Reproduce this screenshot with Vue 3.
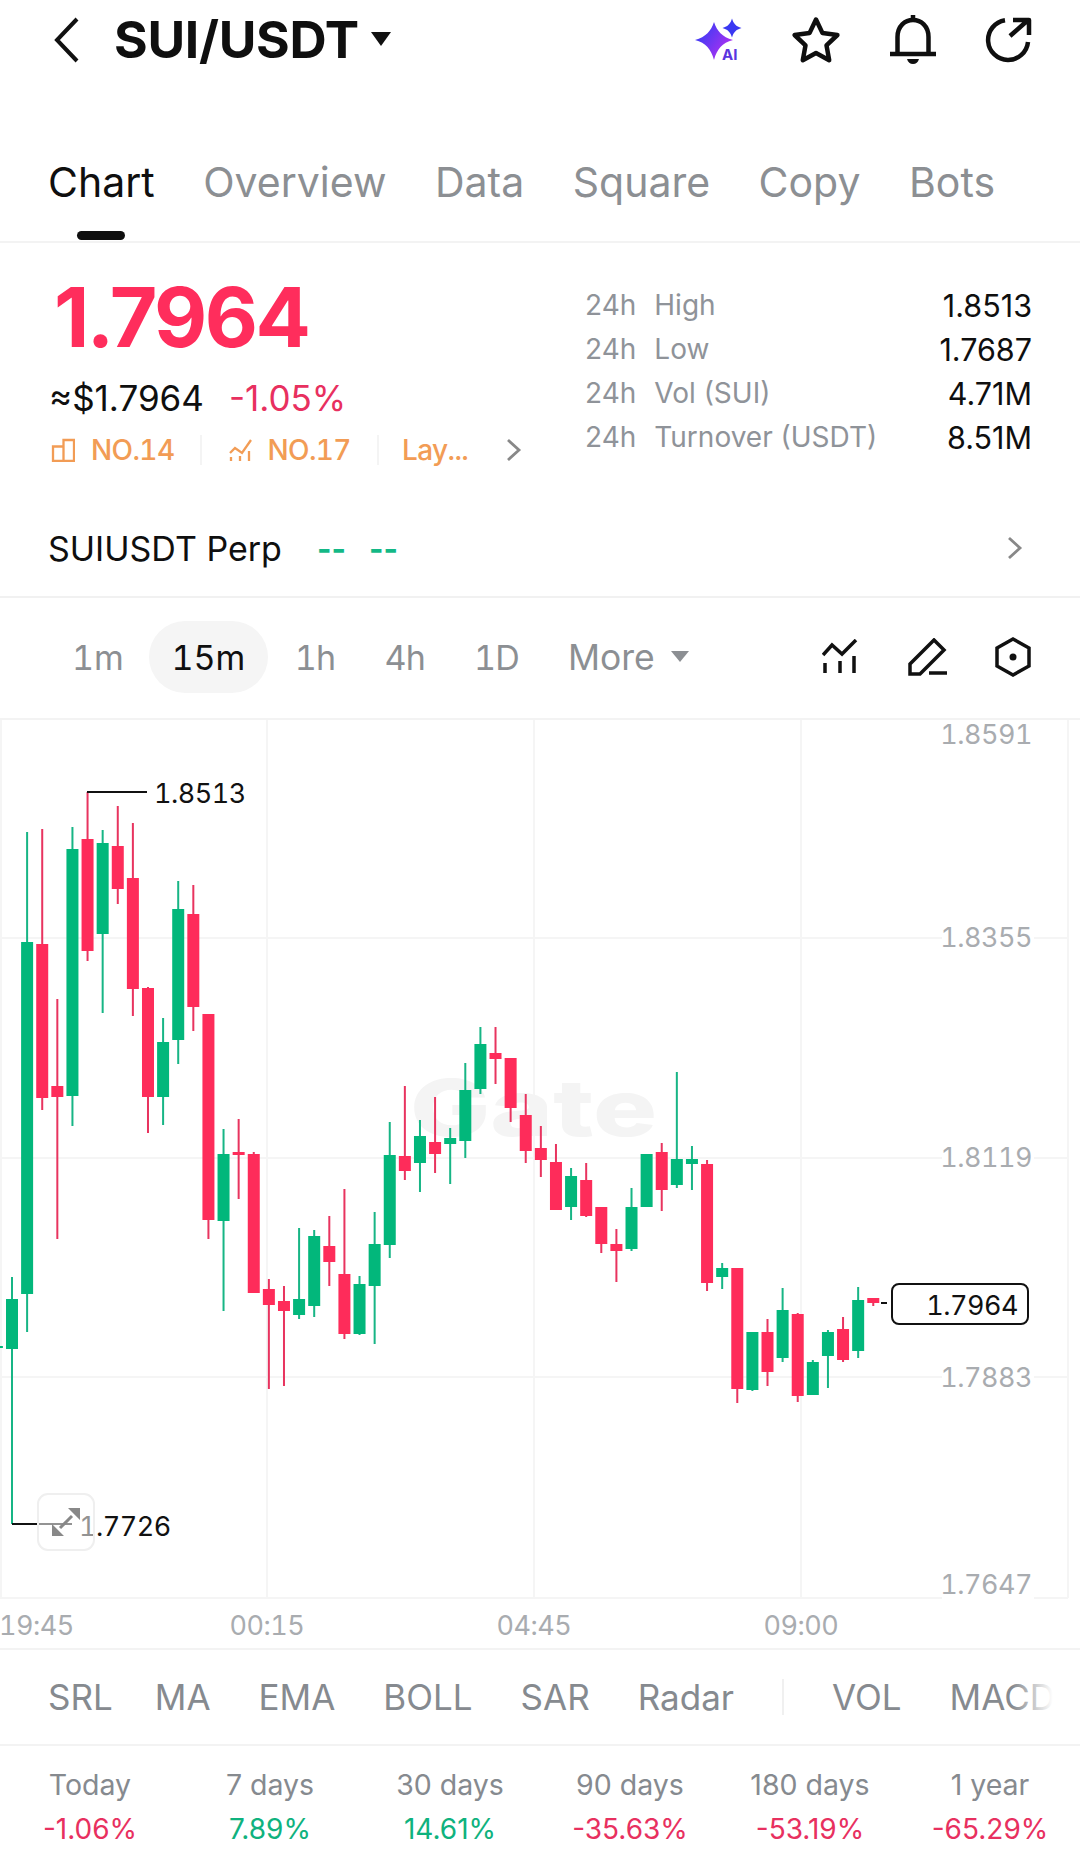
<script setup>
const G = 'g', R = 'r'
const raw = [
  [G,1345,1346,1348,1348],
  [G,1277,1299,1349,1524],[G,832,942,1294,1332],[R,829,944,1098,1110],[R,999,1086,1097,1239],
  [G,827,849,1096,1126],[R,792,839,951,961],[G,830,843,934,1013],[R,806,846,889,904],
  [R,823,878,989,1016],[R,987,988,1097,1133],[G,1018,1042,1097,1125],[G,881,909,1040,1064],
  [R,885,914,1007,1031],[R,1014,1014,1220,1239],[G,1129,1154,1221,1311],[R,1119,1152,1155,1199],
  [R,1152,1154,1293,1293],[R,1279,1289,1305,1389],[R,1286,1301,1311,1386],[G,1228,1299,1315,1319],
  [G,1230,1236,1306,1317],[R,1216,1246,1262,1286],[R,1189,1274,1334,1339],[G,1276,1284,1334,1335],
  [G,1212,1244,1286,1344],[G,1122,1155,1245,1258],[R,1086,1156,1171,1180],[G,1120,1136,1163,1192],
  [R,1097,1142,1154,1173],[G,1128,1138,1144,1184],[G,1063,1090,1141,1158],[G,1027,1044,1089,1094],
  [R,1027,1053,1059,1084],[R,1058,1058,1108,1122],[R,1094,1115,1151,1163],[R,1126,1148,1160,1177],
  [R,1144,1162,1210,1210],[G,1168,1176,1207,1220],[R,1163,1180,1216,1217],[R,1207,1207,1244,1253],
  [R,1229,1244,1251,1282],[G,1188,1207,1249,1251],[G,1154,1154,1207,1207],[R,1143,1152,1190,1211],
  [G,1072,1159,1185,1188],[G,1146,1159,1164,1190],[R,1160,1164,1283,1291],[G,1263,1268,1277,1289],
  [R,1268,1268,1389,1403],[G,1332,1332,1390,1391],[R,1319,1332,1372,1386],[G,1288,1310,1358,1362],
  [R,1313,1314,1396,1402],[G,1360,1362,1395,1395],[G,1330,1332,1356,1388],[R,1317,1329,1360,1362],
  [G,1287,1300,1351,1358],[R,1298,1298,1303,1306]
]
const candles = raw.map(([c, top, bt, bb, bot], k) => ({
  c, x: 12 + 15.11 * (k - 1), top, bt, bb, bot
}))
const tabs = ['Overview', 'Data', 'Square', 'Copy', 'Bots']
const stats = [
  ['High', '1.8513'], ['Low', '1.7687'], ['Vol (SUI)', '4.71M'], ['Turnover (USDT)', '8.51M']
]
const frames = ['1h', '4h', '1D']
const gridY = [938, 1158, 1377, 1598]
const gridX = [267, 534, 801]
const yLabels = [['1.8591', 734], ['1.8355', 937], ['1.8119', 1157], ['1.7883', 1377], ['1.7647', 1584]]
const xLabels = [['19:45', -1, 'start'], ['00:15', 267, 'middle'], ['04:45', 534, 'middle'], ['09:00', 801, 'middle']]
const indicators = ['SRL', 'MA', 'EMA', 'BOLL', 'SAR', 'Radar']
const returns = [
  ['Today', '-1.06%', 'down'], ['7 days', '7.89%', 'up'], ['30 days', '14.61%', 'up'],
  ['90 days', '-35.63%', 'down'], ['180 days', '-53.19%', 'down'], ['1 year', '-65.29%', 'down']
]
</script>

<template>
  <div class="page">
    <header class="header">
      <svg class="back" width="26" height="46" viewBox="0 0 26 46"><path d="M23 2 3 23l20 21" /></svg>
      <span class="pair">SUI/USDT</span>
      <span class="caret"></span>
      <div class="actions">
        <svg class="ai" width="50" height="46" viewBox="0 0 50 46">
          <defs>
            <linearGradient id="spark" x1="0" y1="0.2" x2="1" y2="0.9">
              <stop offset="0" stop-color="#2f3cf5" />
              <stop offset="1" stop-color="#c42ff0" />
            </linearGradient>
          </defs>
          <path fill="url(#spark)" d="M20 5C23 14 28 20 39 23 28 26 23 32 20 43 17 32 12 26 1 23 12 20 17 14 20 5Z" />
          <path fill="#3a38f2" d="M38 1.500C39.500 6.500 42 9.500 47.500 11 42 12.500 39.500 15.500 38 20.500 36.500 15.500 34 12.500 28.500 11 34 9.500 36.500 6.500 38 1.500Z" />
          <text class="ai-text" x="28" y="43">AI</text>
        </svg>
        <svg class="ico star" width="52" height="50" viewBox="0 0 52 50">
          <path d="M26 4.500 32.500 18.100 47.400 20 36.500 30.400 39.200 45.200 26 38 12.800 45.200 15.500 30.400 4.600 20 19.500 18.100Z" />
        </svg>
        <svg class="ico bell" width="50" height="54" viewBox="0 0 50 54">
          <path d="M9.500 41V24C9.500 13 17 7 25 7s15.500 6 15.500 17v17" />
          <path d="M2 41h46M25 2v5" />
          <path class="fill" d="M19 46h12c-1 3.500-3 5-6 5s-5-1.500-6-5Z" />
        </svg>
        <svg class="ico share" width="48" height="48" viewBox="0 0 48 48">
          <path d="M21 4.200A20 20 0 1 0 44 26" />
          <path d="M26 20 43 5M29 4h16v15" />
        </svg>
      </div>
    </header>

    <nav class="tabs">
      <span class="tab active">Chart</span>
      <span v-for="t in tabs" :key="t" class="tab">{{ t }}</span>
    </nav>

    <section class="summary">
      <div class="left">
        <div class="price">1.7964</div>
        <div class="approx"><span>≈$1.7964</span><span class="pct">-1.05%</span></div>
        <div class="ranks">
          <svg class="rank-ico" width="24" height="24" viewBox="0 0 24 24"><path d="M2 8.500h10.500V23H2zM12.500 2H23v21H12.500z" /></svg>
          <span class="rank-text">NO.14</span>
          <i class="rank-sep"></i>
          <svg class="rank-ico thin" width="24" height="24" viewBox="0 0 24 24"><path d="M2 15l5-5 7 5 9-13M3 19v4M12 18v5M21 13v10" /></svg>
          <span class="rank-text second">NO.17</span>
          <i class="rank-sep"></i>
          <span class="rank-text lay">Lay...</span>
          <svg class="chev small" width="16" height="24" viewBox="0 0 16 24"><path d="M2 2l11 10L2 22" /></svg>
        </div>
      </div>
      <dl class="stats">
        <div v-for="s in stats" :key="s[0]" class="stat">
          <dt><span class="h24">24h</span>{{ s[0] }}</dt>
          <dd>{{ s[1] }}</dd>
        </div>
      </dl>
    </section>

    <section class="perp">
      <span class="perp-name">SUIUSDT Perp</span>
      <span class="dash">--</span>
      <span class="dash">--</span>
      <svg class="chev perp-chev" width="16" height="24" viewBox="0 0 16 24"><path d="M2 2l11 10L2 22" /></svg>
    </section>

    <section class="frames">
      <span class="frame first">1m</span>
      <span class="frame pill">15m</span>
      <span v-for="f in frames" :key="f" class="frame">{{ f }}</span>
      <span class="frame more">More</span>
      <span class="caret small"></span>
      <div class="tools">
        <svg class="tool chart-ico" width="36" height="36" viewBox="0 0 36 36"><path d="M1 16l9-10 10 9L34 1M3 24v10M18 22v12M32 17v17" /></svg>
        <svg class="tool" width="40" height="38" viewBox="0 0 40 38"><path d="M2 36V26L26 2l10 10-24 24ZM21 35h18" /></svg>
        <svg class="tool" width="38" height="42" viewBox="0 0 38 42">
          <path d="M19 3 35 12v18L19 39 3 30V12Z" />
          <circle class="dot" cx="19" cy="21" r="3.500" />
        </svg>
      </div>
    </section>

    <section class="chart">
      <svg class="plot" width="1080" height="928" viewBox="0 720 1080 928">
        <g v-for="y in gridY" :key="y">
          <line class="grid" x1="0" x2="942" :y1="y" :y2="y" />
          <line class="grid" x1="1034" x2="1068" :y1="y" :y2="y" />
        </g>
        <line v-for="x in gridX" :key="x" class="grid" :x1="x" :x2="x" y1="720" y2="1598" />
        <line class="grid" x1="1" x2="1" y1="720" y2="1598" />
        <line class="grid" x1="1068" x2="1068" y1="720" y2="1598" />
        <text class="mark" x="410" y="1136" textLength="247" lengthAdjust="spacingAndGlyphs">Gate</text>
        <g v-for="(k, i) in candles" :key="i" :class="k.c === 'g' ? 'green' : 'red'">
          <rect class="wick" :x="k.x - 1" :y="k.top" width="2" :height="k.bot - k.top" />
          <rect :x="k.x - 6" :y="k.bt" width="12" :height="k.bb - k.bt" />
        </g>
        <path class="leader" d="M87 792H147M12 1524H72" />
        <path class="leader" d="M881 1303h6" />
        <text class="mono dark" x="154" y="803">1.8513</text>
        <text class="mono dark" x="79" y="1536">1.7726</text>
        <text v-for="l in yLabels" :key="l[0]" class="mono axis" x="1032" :y="l[1] + 10" text-anchor="end">{{ l[0] }}</text>
        <text v-for="l in xLabels" :key="l[0]" class="mono axis" :x="l[1]" y="1635" :text-anchor="l[2]">{{ l[0] }}</text>
        <rect class="last-box" x="892" y="1284" width="136" height="40" rx="7" />
        <text class="mono dark" x="1018" y="1315" text-anchor="end">1.7964</text>
      </svg>
      <button class="expand">
        <svg width="30" height="30" viewBox="0 0 30 30">
          <path class="expand-line" d="M9 21 21 9" />
          <path class="expand-head" d="M29 1v12L17 1ZM1 29V17l12 12Z" />
        </svg>
      </button>
    </section>

    <section class="indicators">
      <span v-for="n in indicators" :key="n" class="ind">{{ n }}</span>
      <i class="ind-sep"></i>
      <span class="ind">VOL</span>
      <span class="ind">MACD</span>
      <i class="fade"></i>
    </section>

    <section class="returns">
      <div v-for="r in returns" :key="r[0]" class="ret">
        <span class="ret-label">{{ r[0] }}</span>
        <span :class="['ret-val', r[2]]">{{ r[1] }}</span>
      </div>
    </section>
  </div>
</template>

<style scoped>
.page {
  position: relative;
  width: 1080px;
  height: 1862px;
  overflow: hidden;
  background: #fff;
  color: #0f0f0f;
  font-family: Inter, "Liberation Sans", sans-serif;
}
.header {
  display: flex;
  align-items: center;
  height: 80px;
  padding: 0 48px 0 54px;
}
.back path { fill: none; stroke: #111; stroke-width: 4; }
.pair {
  margin-left: 34px;
  font-size: 51.500px;
  font-weight: 700;
  line-height: 1;
  letter-spacing: -0.3px;
}
.caret {
  width: 0;
  height: 0;
  margin-left: 12px;
  margin-bottom: 2px;
  border-left: 10.5px solid transparent;
  border-right: 10.5px solid transparent;
  border-top: 14px solid #111;
}
.actions {
  display: flex;
  align-items: center;
  gap: 46px;
  margin-left: auto;
}
.ai-text { font-size: 15px; font-weight: 700; fill: #5a35e0; }
.ico path { fill: none; stroke: #0f0f0f; stroke-width: 4.5; stroke-linejoin: round; }
.ico path.fill { fill: #0f0f0f; stroke: none; }
.tabs {
  display: flex;
  align-items: flex-start;
  gap: 48.500px;
  height: 163px;
  box-sizing: border-box;
  padding: 78px 0 0 48px;
  border-bottom: 2px solid #f3f3f3;
  font-size: 41px;
  color: #8c8f93;
}
.tab { position: relative; line-height: 48px; white-space: nowrap; }
.tab.active { color: #0f0f0f; }
.tab.active::after {
  content: "";
  position: absolute;
  left: 29px;
  bottom: -34px;
  width: 48px;
  height: 9px;
  border-radius: 5px;
  background: #0f0f0f;
}
.summary {
  display: flex;
  height: 265px;
  box-sizing: border-box;
  padding-top: 33px;
}
.left { width: 585px; flex: none; padding-left: 49px; box-sizing: border-box; }
.price {
  font-size: 82px;
  font-weight: 700;
  line-height: 84px;
  letter-spacing: -2.500px;
  color: #ff2d5c;
  margin-left: 5px;
}
.approx {
  display: flex;
  gap: 25px;
  margin-top: 17px;
  font-size: 35px;
  line-height: 42px;
}
.pct { color: #e8305f; }
.ranks {
  display: flex;
  align-items: center;
  margin: 13px 0 0 2px;
  height: 36px;
  font-size: 28px;
  font-weight: 500;
  font-feature-settings: "tnum";
  color: #f29c55;
}
.rank-ico { flex: none; }
.rank-ico path { fill: none; stroke: #f29c55; stroke-width: 2.300; }
.rank-text { margin-left: 16px; white-space: nowrap; letter-spacing: -0.6px; }
.rank-text.second { margin-left: 15px; }
.rank-text.lay { margin-left: -3px; }
.rank-sep { width: 2px; height: 30px; margin: 0 26px; background: #f4f4f4; }
.chev path { fill: none; stroke: #888; stroke-width: 2.800; }
.chev.small { margin-left: 38px; }
.stats { margin: 0; padding: 7px 48px 0 0; flex: 1; }
.stat {
  display: flex;
  justify-content: space-between;
  height: 44px;
  align-items: center;
  font-size: 28px;
}
.stat dt { color: #8f9399; }
.h24 { margin-right: 18px; }
.stat dd { margin: 0; color: #0f0f0f; font-size: 30.500px; }
.perp {
  display: flex;
  align-items: center;
  height: 90px;
  box-sizing: border-box;
  padding: 0 57px 8px 48px;
  border-bottom: 2px solid #f1f1f1;
  font-size: 34px;
}
.dash { margin-left: 23px; color: #13b886; font-size: 31px; font-weight: 700; }
.perp-name + .dash { margin-left: 35px; }
.perp-chev { margin-left: auto; }
.frames {
  display: flex;
  align-items: center;
  height: 122px;
  box-sizing: border-box;
  padding: 0 48px 2px 72px;
  border-bottom: 2px solid #f3f3f3;
  font-size: 34px;
  font-feature-settings: "tnum";
  color: #8c8f93;
}
.frame { margin-right: 49px; white-space: nowrap; letter-spacing: -0.8px; }
.frame.first { margin-right: 25px; letter-spacing: 0; }
.frame.pill {
  display: flex;
  align-items: center;
  box-sizing: border-box;
  justify-content: center;
  width: 119px;
  height: 72px;
  margin-right: 27px;
  border-radius: 36px;
  background: #f5f5f5;
  color: #0f0f0f;
  letter-spacing: 0;
}
.frame.more { margin-right: 0; font-size: 35.500px; letter-spacing: 0; }
.caret.small { margin-left: 16px; border-left-width: 9px; border-right-width: 9px; border-top: 11px solid #8c8f93; }
.tools { display: flex; align-items: center; gap: 46px; margin-left: auto; }
.chart-ico { margin-right: 4px; }
.tool path { fill: none; stroke: #111; stroke-width: 3.500; }
.tool .dot { fill: #111; }
.chart { position: relative; height: 928px; border-bottom: 2px solid #f3f3f3; }
.plot { display: block; overflow: visible; }
.grid { stroke: #f5f5f5; stroke-width: 2; }
.mark { font-size: 78px; font-weight: 800; fill: #f4f4f4; }
.green rect { fill: #02b77b; }
.red rect { fill: #fe2c5a; }
.green .wick { fill: #17b585; }
.red .wick { fill: #e8345f; }
.leader { fill: none; stroke: #111; stroke-width: 2; }
.mono { font-size: 27px; letter-spacing: -0.5px; font-feature-settings: "tnum"; }
.dark { fill: #111; }
.axis { fill: #a9acb0; }
.last-box { fill: #fff; stroke: #111; stroke-width: 2; }
.expand {
  position: absolute;
  left: 37px;
  top: 773px;
  width: 58px;
  height: 58px;
  padding: 0;
  display: flex;
  align-items: center;
  justify-content: center;
  border: 2px solid #efefef;
  border-radius: 11px;
  background: rgba(255, 255, 255, 0.55);
}
.expand-line { stroke: #888; stroke-width: 3; }
.expand-head { fill: #888; }
.indicators {
  position: relative;
  display: flex;
  align-items: center;
  gap: 48px;
  height: 96px;
  box-sizing: border-box;
  padding-left: 48px;
  border-bottom: 2px solid #f3f3f3;
  font-size: 35px;
  color: #868a8f;
  white-space: nowrap;
  overflow: hidden;
}
.ind:first-child { margin-right: -6px; }
.ind-sep { width: 2px; height: 36px; flex: none; background: #f0f0f0; }
.fade {
  position: absolute;
  right: 0;
  top: 0;
  bottom: 0;
  width: 68px;
  background: linear-gradient(90deg, rgba(255, 255, 255, 0), #fff 60%);
}
.returns { display: grid; grid-template-columns: repeat(6, 1fr); padding-top: 21px; }
.ret { display: flex; flex-direction: column; align-items: center; gap: 8px; font-size: 28.500px; }
.ret-label { color: #868a8f; line-height: 36px; }
.ret-val { line-height: 36px; font-size: 28px; }
.down { color: #e8305f; }
.up { color: #0fb27e; }
</style>
<style>
html, body { margin: 0; background: #fff; }
</style>
